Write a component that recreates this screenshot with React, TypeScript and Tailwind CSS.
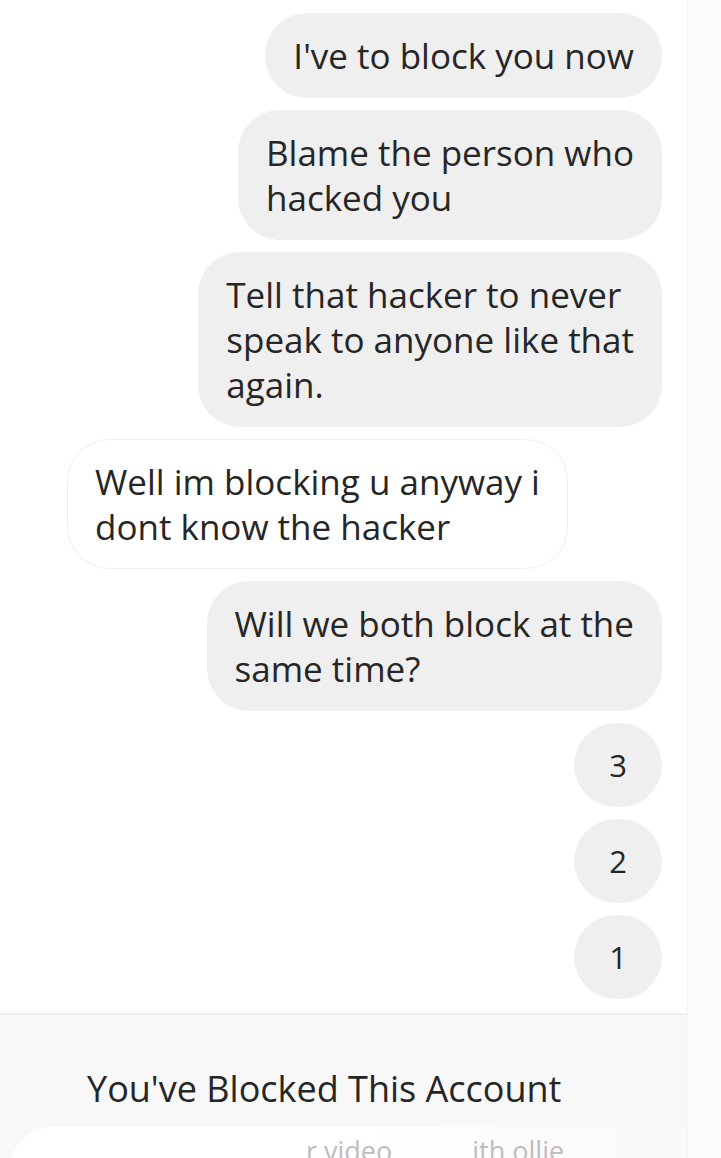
const font = { fontFamily: '"Open Sans", "Noto Sans", sans-serif' };

type Msg = { text: string; mine: boolean };

const messages: Msg[] = [
  { text: "I've to block you now", mine: true },
  { text: "Blame the person who\nhacked you", mine: true },
  { text: "Tell that hacker to never\nspeak to anyone like that\nagain.", mine: true },
  { text: "Well im blocking u anyway i\ndont know the hacker", mine: false },
  { text: "Will we both block at the\nsame time?", mine: true },
];

const Bubble = ({ msg }: { msg: Msg }) => (
  <div
    className={
      msg.mine
        ? "self-end whitespace-pre-line rounded-[42px] bg-[#efefef] px-[28px] py-5 text-[35px] leading-[45px] text-[#262626]"
        : "ml-[67px] self-start whitespace-pre-line rounded-[42px] border border-[#efefef] bg-white px-[27px] py-[19px] text-[35px] leading-[45px] text-[#262626]"
    }
  >
    {msg.text}
  </div>
);

const Count = ({ n }: { n: string }) => (
  <div className="flex h-[84px] w-[88px] items-center justify-center self-end rounded-full bg-[#efefef] text-[31px] text-[#262626]">
    {n}
  </div>
);

export default function App() {
  return (
    <div className="flex h-[1158px] w-[721px] overflow-hidden bg-white" style={font}>
      <div className="flex w-[687px] flex-col">
        <div className="flex flex-col gap-3 pt-[13px] pr-[25px]">
          {messages.map((m, i) => (
            <Bubble key={i} msg={m} />
          ))}
          <Count n="3" />
          <Count n="2" />
          <Count n="1" />
        </div>

        <div className="mt-[14px] flex flex-1 flex-col border-t-2 border-[#efefef] bg-[#f8f8f8]">
          <div className="pt-[52px] pl-[87px] text-[36px] leading-[44px] text-[#262626]">
            You've Blocked This Account
          </div>
          <div className="mt-[16px] ml-[10px] flex flex-1 rounded-tl-[60px] bg-gradient-to-r from-white via-white to-[#f9f9f9] pt-[6px] text-[27px] leading-[36px] text-[#bdbdbd]">
            <span className="ml-[296px]">r video</span>
            <span className="ml-[80px]">ith ollie</span>
          </div>
        </div>
      </div>
      <div className="flex-1 border-l border-[#f3f3f3] bg-[#fbfbfb]" />
    </div>
  );
}
